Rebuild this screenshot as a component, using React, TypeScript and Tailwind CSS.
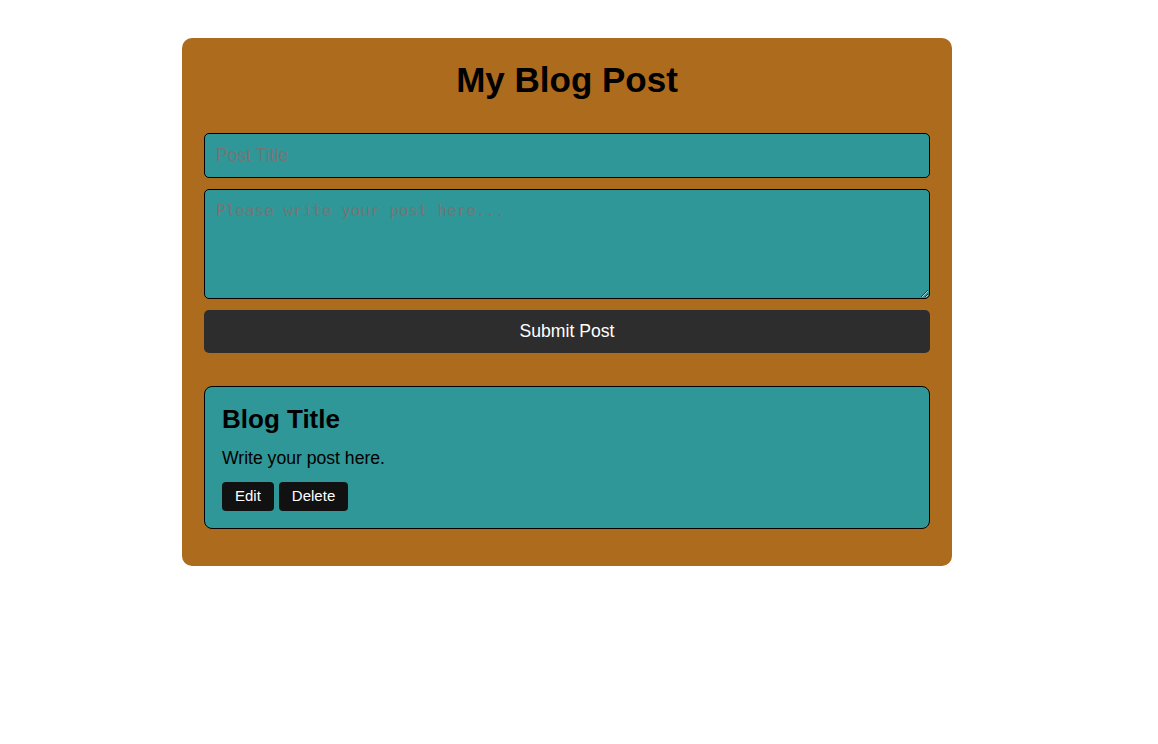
export default function App() {
  return (
    <div className="min-h-[744px] bg-white font-['Liberation_Sans',Arial,sans-serif] text-black">
      <div className="pt-[38px] pl-[182px]">
        <main className="w-[770px] rounded-[10px] bg-[#ad6b1d] px-[22px] pt-[22px] pb-[37px]">
          <h1 className="text-center text-[35px] leading-[40px] font-bold">My Blog Post</h1>

          <form className="mt-[33px] flex flex-col gap-[11px]" onSubmit={(event) => event.preventDefault()}>
            <input
              placeholder="Post Title"
              className="h-[45px] w-full rounded-[5px] border border-black bg-[#2f9797] px-[11px] text-[17.6px] placeholder:text-[#757575] focus:outline-none"
            />
            <textarea
              placeholder="Please write your post here..."
              className="h-[110px] w-full rounded-[5px] border border-black bg-[#2f9797] px-[11px] py-[9px] font-['DejaVu_Sans_Mono',monospace] text-[16px] placeholder:text-[#757575] focus:outline-none"
            />
            <button type="submit" className="h-[43px] w-full rounded-[5px] bg-[#2e2d2d] text-[17.6px] text-white">
              Submit Post
            </button>
          </form>

          <article className="mt-[33px] rounded-[8px] border border-black bg-[#2f9797] px-[17px] pt-[17px] pb-[17px]">
            <h2 className="text-[26px] leading-[30px] font-bold">Blog Title</h2>
            <p className="mt-[14px] text-[17.6px] leading-[20px]">Write your post here.</p>
            <div className="mt-[14px] flex gap-[5px]">
              <button type="button" className="h-[29px] rounded-[4px] bg-[#111111] px-[13px] text-[15px] text-white">
                Edit
              </button>
              <button type="button" className="h-[29px] rounded-[4px] bg-[#111111] px-[13px] text-[15px] text-white">
                Delete
              </button>
            </div>
          </article>
        </main>
      </div>
    </div>
  );
}
